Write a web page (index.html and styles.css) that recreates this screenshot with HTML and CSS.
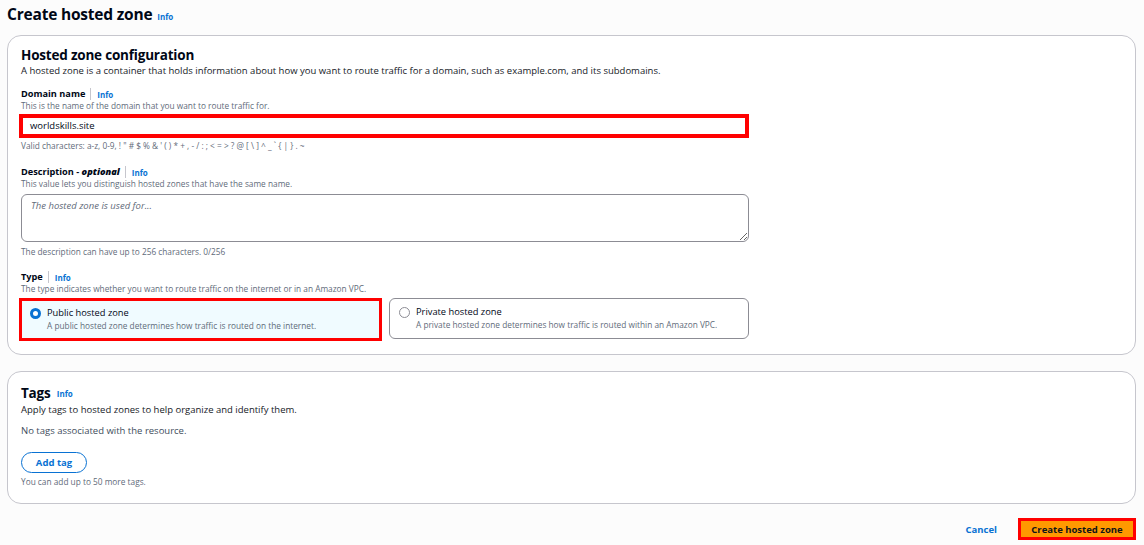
FILE: index.html
```html
<!DOCTYPE html>
<html lang="en">
<head>
<meta charset="utf-8">
<title>Create hosted zone</title>
<link rel="stylesheet" href="styles.css">
</head>
<body>
<div class="page">
  <h1 class="page-title">Create hosted zone <a class="info title-info">Info</a></h1>

  <section class="panel config">
    <h2 class="panel-title">Hosted zone configuration</h2>
    <p class="panel-desc">A hosted zone is a container that holds information about how you want to route traffic for a domain, such as example.com, and its subdomains.</p>

    <div class="field first">
      <div class="label-row"><span class="label">Domain name</span><span class="sep"></span><a class="info">Info</a></div>
      <div class="hint">This is the name of the domain that you want to route traffic for.</div>
      <div class="annot input-annot"><div class="input">worldskills.site</div></div>
      <div class="hint after">Valid characters: a-z, 0-9, ! " # $ % &amp; ' ( ) * + , - / : ; &lt; = &gt; ? @ [ \ ] ^ _ ` { | } . ~</div>
    </div>

    <div class="field">
      <div class="label-row"><span class="label">Description - <em class="opt">optional</em></span><span class="sep"></span><a class="info">Info</a></div>
      <div class="hint">This value lets you distinguish hosted zones that have the same name.</div>
      <textarea class="textarea" placeholder="The hosted zone is used for..."></textarea>
      <div class="hint after2">The description can have up to 256 characters. 0/256</div>
    </div>

    <div class="field type">
      <div class="label-row"><span class="label">Type</span><span class="sep"></span><a class="info">Info</a></div>
      <div class="hint">The type indicates whether you want to route traffic on the internet or in an Amazon VPC.</div>
      <div class="cards">
        <div class="card selected">
          <span class="radio on"></span>
          <div class="card-text">
            <div class="card-title">Public hosted zone</div>
            <div class="card-desc">A public hosted zone determines how traffic is routed on the internet.</div>
          </div>
        </div>
        <div class="card">
          <span class="radio"></span>
          <div class="card-text">
            <div class="card-title">Private hosted zone</div>
            <div class="card-desc">A private hosted zone determines how traffic is routed within an Amazon VPC.</div>
          </div>
        </div>
      </div>
    </div>
  </section>

  <section class="panel tags">
    <h2 class="panel-title">Tags <a class="info">Info</a></h2>
    <p class="panel-desc">Apply tags to hosted zones to help organize and identify them.</p>
    <p class="empty">No tags associated with the resource.</p>
    <button class="btn-outline">Add tag</button>
    <div class="hint after3">You can add up to 50 more tags.</div>
  </section>

  <div class="footer">
    <a class="cancel">Cancel</a>
    <button class="btn-primary">Create hosted zone</button>
  </div>
</div>
</body>
</html>
```

FILE: styles.css
```css
* { box-sizing: border-box; }
html, body { margin: 0; padding: 0; }
body {
  background: #fcfcfc;
  font-family: "Open Sans", "Liberation Sans", sans-serif;
  color: #16191f;
}
.page {
  padding: 0 8px 0 7px;
}
.page-title {
  margin: 0;
  padding-top: 3px;
  height: 35px;
  font-size: 15.5px;
  line-height: 22px;
  font-weight: 700;
  letter-spacing: -0.2px;
  color: #000716;
}
.info {
  color: #0972d3;
  font-weight: 700;
  font-size: 8px;
  text-decoration: none;
  letter-spacing: 0;
}
.title-info { margin-left: 1px; vertical-align: 0; }

.panel {
  background: #fff;
  border: 1px solid #c6c6cd;
  border-radius: 14px;
  padding: 10px 13px 13px 13px;
}
.panel-title {
  margin: 0;
  font-size: 13.5px;
  line-height: 18px;
  font-weight: 700;
  letter-spacing: -0.2px;
  color: #000716;
}
.panel-title .info { margin-left: 3px; font-size: 8px; vertical-align: 1px; }
.panel-desc {
  margin: 0;
  font-size: 9.5px;
  line-height: 14px;
  color: #16191f;
}
.field { width: 728px; margin-top: 14px; }
.field.first { margin-top: 10px; }
.field.type { margin-top: 13px; }
.label-row {
  display: flex;
  align-items: center;
  height: 12px;
}
.label {
  font-size: 9.2px;
  font-weight: 700;
  line-height: 12px;
  color: #000716;
}
.opt { font-style: italic; font-weight: 800; }
.sep {
  width: 1px;
  height: 12px;
  background: #c6c6cd;
  margin: 0 6px 0 5px;
}
.hint {
  font-size: 8.3px;
  line-height: 12px;
  color: #5f6b7a;
  white-space: nowrap;
}
.hint.after { margin-top: 2px; }
.hint.after2 { margin-top: 4px; }
.hint.after3 { margin-top: 3px; }

.annot { border: 4px solid #ff0000; }
.input-annot {
  margin-top: 2px;
  margin-left: -2px;
  width: 730px;
  height: 24px;
}
.input {
  height: 16px;
  background: #fff;
  font-size: 9.5px;
  line-height: 16px;
  padding-left: 7px;
  color: #000716;
}
.textarea {
  display: block;
  margin-top: 4px;
  width: 728px;
  height: 48px;
  border: 1px solid #8c8c94;
  border-radius: 6px;
  padding: 4px 9px;
  font-family: "Open Sans", "Liberation Sans", sans-serif;
  font-size: 9.5px;
  line-height: 14px;
  resize: vertical;
  background: #fff;
}
.textarea::placeholder { color: #5f6b7a; font-style: italic; }

.cards {
  display: grid;
  grid-template-columns: 363px 360px;
  column-gap: 7px;
  align-items: start;
  margin-top: 3px;
  margin-left: -2px;
  width: 730px;
}
.card {
  display: flex;
  align-items: flex-start;
  height: 41px;
  border: 1px solid #8c8c94;
  border-radius: 6px;
  padding: 7px 10px 0 9px;
  background: #fff;
}
.card.selected {
  height: 43px;
  border: 3px solid #ff0000;
  border-radius: 0;
  background: #f0fbff;
  padding: 6px 10px 0 8px;
}
.radio {
  flex: none;
  width: 11px;
  height: 11px;
  border-radius: 50%;
  border: 1px solid #8c8c94;
  margin-top: 1px;
  margin-right: 6px;
  background: #fff;
}
.radio.on { border: 3.5px solid #0972d3; }
.card-title {
  font-size: 9.3px;
  line-height: 12px;
  color: #000716;
}
.card-desc {
  font-size: 8.3px;
  line-height: 13px;
  color: #5f6b7a;
  white-space: nowrap;
}

.tags { margin-top: 16px; padding-top: 12px; padding-bottom: 15px; }
.empty {
  margin: 8px 0 0 0;
  font-size: 9.5px;
  line-height: 12px;
  color: #414d5c;
}
.btn-outline {
  display: block;
  margin-top: 15px;
  width: 66px;
  height: 21px;
  border: 1.5px solid #0972d3;
  border-radius: 11px;
  background: #fff;
  color: #0972d3;
  font-family: "Open Sans", "Liberation Sans", sans-serif;
  font-size: 9.5px;
  font-weight: 700;
  padding: 0;
}

.footer {
  display: flex;
  justify-content: flex-end;
  align-items: center;
  margin-top: 14px;
  height: 22px;
}
.cancel {
  color: #0972d3;
  font-size: 9.5px;
  font-weight: 700;
  margin-right: 21px;
}
.btn-primary {
  width: 118px;
  height: 22px;
  border: 3px solid #ff0000;
  background: #ff9900;
  color: #0f141a;
  font-family: "Open Sans", "Liberation Sans", sans-serif;
  font-size: 9.5px;
  font-weight: 700;
  padding: 0;
}
```
